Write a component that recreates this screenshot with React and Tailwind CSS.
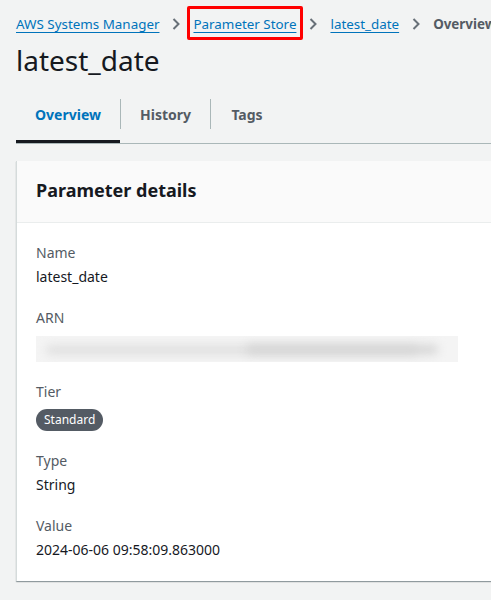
import React from 'react';

const Chevron = () => (
    <svg width="10" height="14" viewBox="0 0 10 14" className="shrink-0">
        <path d="M2.5 2 L7.5 7 L2.5 12" fill="none" stroke="#687078" strokeWidth="2" />
    </svg>
);

const Field = ({ label, children }) => (
    <div className="flex flex-col">
        <div className="text-[14px] leading-[22px] text-[#545b64]">{label}</div>
        <div className="text-[14px] leading-[22px] text-[#16191f] mt-[2px]">{children}</div>
    </div>
);

const App = () => {
    return (
        <div className="w-[491px] h-[600px] overflow-hidden bg-[#f2f3f3] font-['Noto_Sans',sans-serif]">
            <div className="pl-4 pt-[13px] flex items-center gap-[12px] text-[13.4px] leading-[22px] whitespace-nowrap">
                <a className="text-[#0073bb] underline underline-offset-[3px]">AWS Systems Manager</a>
                <Chevron />
                <span className="relative">
                    <a className="text-[#0073bb] underline underline-offset-[3px]">Parameter Store</a>
                    <span className="absolute -left-[6px] -right-[7px] -top-[7px] -bottom-[5px] border-[3px] border-[#f00] rounded-[2px]"></span>
                </span>
                <Chevron />
                <a className="text-[#0073bb] underline underline-offset-[3px]">latest_date</a>
                <Chevron />
                <span className="text-[#545b64] font-bold">Overview</span>
            </div>

            <h1 className="pl-4 mt-[7px] text-[28px] leading-[36px] text-[#16191f]">latest_date</h1>

            <div className="ml-4 mt-[13px] flex border-b border-[#aab7b8]">
                <div className="w-[104px] h-[52px] pb-[3px] flex items-center justify-center text-[14px] font-bold text-[#0073bb] border-b-[3px] border-[#16191f] -mb-[1px]">Overview</div>
                <div className="flex items-center h-[52px] pb-[6px]">
                    <span className="w-px h-[30px] bg-[#aab7b8]"></span>
                </div>
                <div className="w-[89px] h-[52px] flex items-center justify-center text-[14px] font-bold text-[#545b64] pb-[6px]">History</div>
                <div className="flex items-center h-[52px] pb-[6px]">
                    <span className="w-px h-[30px] bg-[#aab7b8]"></span>
                </div>
                <div className="w-[72px] h-[52px] flex items-center justify-center text-[14px] font-bold text-[#545b64] pb-[6px]">Tags</div>
            </div>

            <div className="ml-4 mt-[17px] w-[500px] bg-white border-l border-[#d5dbdb] shadow-[0_1px_1px_0_rgba(0,28,36,0.3),1px_1px_1px_0_rgba(0,28,36,0.15)]">
                <div className="h-[62px] pl-[19px] pt-[17px] bg-[#fafafa] border-b border-[#eaeded]">
                    <h2 className="text-[18px] leading-[24px] font-bold text-[#16191f]">Parameter details</h2>
                </div>
                <div className="pl-[19px] pt-[19px] pb-[20px] flex flex-col gap-[19px]">
                    <Field label="Name">latest_date</Field>
                    <div className="flex flex-col">
                        <div className="text-[14px] leading-[22px] text-[#545b64]">ARN</div>
                        <div className="relative mt-[7px] w-[422px] h-[26px] bg-[#f4f4f4] overflow-hidden">
                            <div className="absolute left-[10px] right-[40px] top-[10px] h-[8px] bg-[#dcdcdc] blur-[5px] rounded-full"></div>
                            <div className="absolute left-[210px] right-[20px] top-[9px] h-[9px] bg-[#d4d4d4] blur-[5px] rounded-full"></div>
                        </div>
                    </div>
                    <div className="flex flex-col">
                        <div className="text-[14px] leading-[22px] text-[#545b64]">Tier</div>
                        <div className="mt-[3px]">
                            <span className="inline-flex items-center h-[22px] px-[8px] rounded-full bg-[#545b64] text-white text-[12px]">Standard</span>
                        </div>
                    </div>
                    <Field label="Type">String</Field>
                    <Field label="Value">2024-06-06 09:58:09.863000</Field>
                </div>
            </div>
        </div>
    );
};

export default App;
